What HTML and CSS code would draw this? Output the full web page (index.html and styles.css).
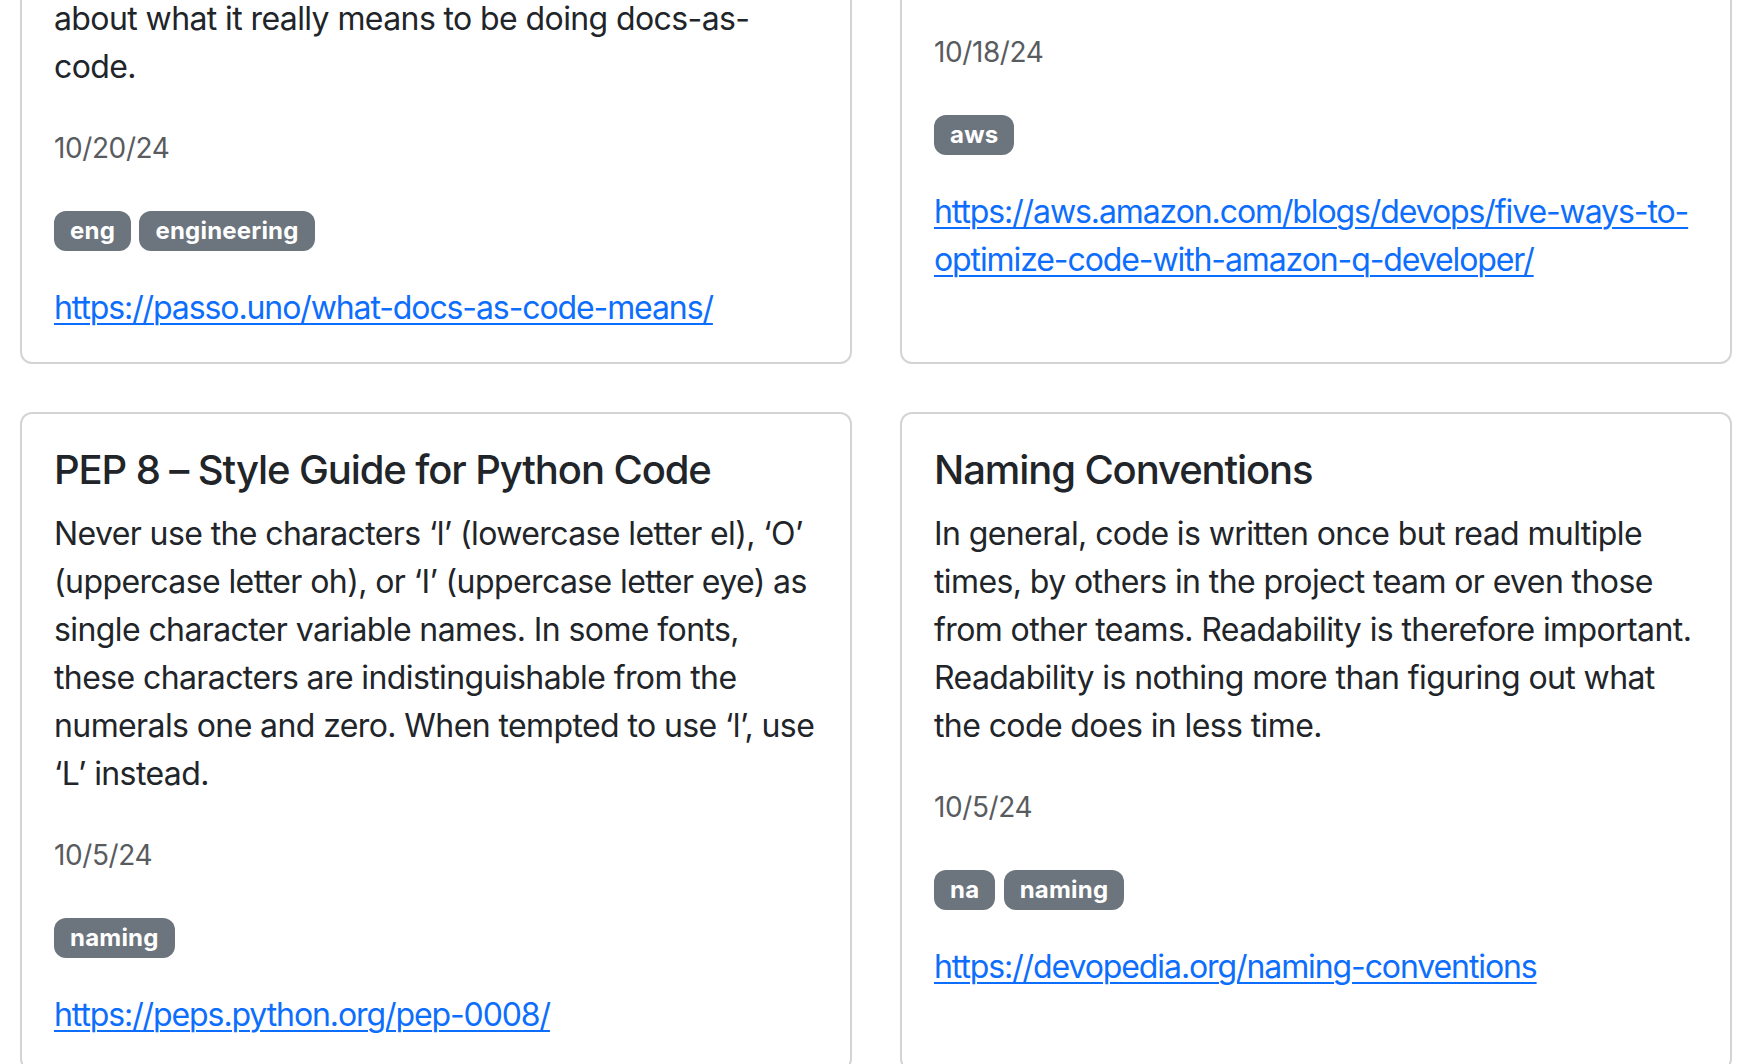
FILE: index.html
```html
<!DOCTYPE html>
<html lang="en">
<head>
<meta charset="utf-8">
<title>Links</title>
<link rel="stylesheet" href="styles.css">
</head>
<body>
<main class="page">
  <div class="grid">
    <article class="card">
      <h5 class="card-title">What docs-as-code means</h5>
      <p class="card-text">Some thoughts on docs-as-code,<br>about what it really means to be doing docs-as-code.</p>
      <p class="card-text"><small class="muted">10/20/24</small></p>
      <p class="card-text"><span class="badge">eng</span> <span class="badge">engineering</span></p>
      <p class="card-text"><a href="#">https://passo.uno/what-docs-as-code-means/</a></p>
    </article>
    <article class="card">
      <h5 class="card-title">Five ways to optimize code</h5>
      <p class="card-text">Tips for Amazon Q Developer.</p>
      <p class="card-text"><small class="muted">10/18/24</small></p>
      <p class="card-text"><span class="badge">aws</span></p>
      <p class="card-text"><a href="#">https://aws.amazon.com/blogs/devops/five-ways-to-optimize-code-with-amazon-q-developer/</a></p>
    </article>
    <article class="card">
      <h5 class="card-title">PEP 8 – Style Guide for Python Code</h5>
      <p class="card-text">Never use the characters ‘l’ (lowercase letter el), ‘O’ (uppercase letter oh), or ‘I’ (uppercase letter eye) as single character variable names. In some fonts, these characters are indistinguishable from the numerals one and zero. When tempted to use ‘l’, use ‘L’ instead.</p>
      <p class="card-text"><small class="muted">10/5/24</small></p>
      <p class="card-text"><span class="badge">naming</span></p>
      <p class="card-text"><a href="#">https://peps.python.org/pep-0008/</a></p>
    </article>
    <article class="card">
      <h5 class="card-title">Naming Conventions</h5>
      <p class="card-text">In general, code is written once but read multiple times, by others in the project team or even those from other teams. Readability is therefore important. Readability is nothing more than figuring out what the code does in less time.</p>
      <p class="card-text"><small class="muted">10/5/24</small></p>
      <p class="card-text"><span class="badge">na</span> <span class="badge">naming</span></p>
      <p class="card-text"><a href="#">https://devopedia.org/naming-conventions</a></p>
    </article>
  </div>
</main>
</body>
</html>
```

FILE: styles.css
```css
html, body {
  margin: 0;
  padding: 0;
  background: #ffffff;
}

body {
  font-family: Inter, "Liberation Sans", sans-serif;
  font-size: 32px;
  line-height: 48px;
  letter-spacing: -0.6px;
  color: #212529;
  overflow: hidden;
}

.page {
  padding: 0 20px;
  margin-top: -151px;
}

.grid {
  display: grid;
  grid-template-columns: 1fr 1fr;
  column-gap: 48px;
  row-gap: 48px;
}

.card {
  border: 2px solid #d3d4d5;
  border-radius: 12px;
  padding: 32px 32px 30px 32px;
  display: flex;
  flex-direction: column;
  background: #fff;
  min-width: 0;
}

.card-title {
  margin: 0 0 16px 0;
  font-size: 40px;
  line-height: 48px;
  font-weight: 500;
  letter-spacing: -1.1px;
  color: #212529;
}

.card-text {
  margin: 0 0 32px 0;
}

.card-text:last-child {
  margin-bottom: 0;
}

.muted {
  font-size: 28px;
  letter-spacing: -0.4px;
  color: #595c5f;
}

.badge {
  display: inline-block;
  background: #6c757d;
  color: #fff;
  font-size: 24px;
  font-weight: 700;
  line-height: 1;
  letter-spacing: 0.2px;
  padding: 8px 16px;
  border-radius: 12px;
  vertical-align: baseline;
}

a {
  color: #0d6efd;
  letter-spacing: -1.1px;
  text-decoration: underline;
  text-decoration-thickness: 2px;
  text-underline-offset: 4px;
  overflow-wrap: break-word;
}
```
